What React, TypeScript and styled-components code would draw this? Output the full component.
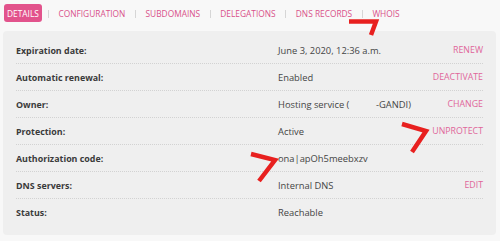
import React from "react";
import styled, { createGlobalStyle } from "styled-components";

const Global = createGlobalStyle`
  html, body { margin: 0; padding: 0; background: #f8f8f8; }
  body { font-family: "Open Sans", "DejaVu Sans", sans-serif; }
`;

const Page = styled.div`
  position: relative;
  width: 500px;
  height: 241px;
  padding: 4px 3px 0 3px;
  box-sizing: border-box;
`;

const Tabs = styled.nav`
  display: flex;
  align-items: center;
  height: 18px;
  margin-left: 1px;
`;

const Tab = styled.span<{ $active?: boolean }>`
  font-size: 8.35px;
  text-transform: uppercase;
  color: ${(p) => (p.$active ? "#ffffff" : "#d9518a")};
  background: ${(p) => (p.$active ? "#e2538c" : "transparent")};
  border-radius: 3px;
  padding: ${(p) => (p.$active ? "0 3px" : "0")};
  height: 18px;
  line-height: 19px;
`;

const Sep = styled.span<{ $first?: boolean }>`
  width: 1px;
  height: 8px;
  background: #d6d6d6;
  margin: 1px 9.6px 0 ${(p) => (p.$first ? "6px" : "9.6px")};
`;

const Panel = styled.section`
  margin-top: 9px;
  width: 493px;
  background: #efefef;
  border-radius: 4px;
  padding: 6px 13px 9px 13px;
  box-sizing: border-box;
`;

const Row = styled.div<{ $last?: boolean }>`
  display: grid;
  grid-template-columns: 262px 1fr auto;
  align-items: center;
  height: 27px;
  border-bottom: ${(p) => (p.$last ? "none" : "1px dotted #d2d2d2")};
  box-sizing: border-box;
`;

const Label = styled.span`
  font-size: 8.9px;
  font-weight: 700;
  color: #3a3a3a;
`;

const Value = styled.span`
  font-size: 9.35px;
  color: #454545;
  white-space: pre;
`;

const Action = styled.span`
  font-size: 8.8px;
  color: #e0669a;
  text-transform: uppercase;
  text-align: right;
`;

const Arrow = styled.svg`
  position: absolute;
  left: 0;
  top: 0;
  pointer-events: none;
`;

const rows: [string, string, string][] = [
  ["Expiration date:", "June 3, 2020, 12:36 a.m.", "Renew"],
  ["Automatic renewal:", "Enabled", "Deactivate"],
  ["Owner:", "Hosting service (           -GANDI)", "Change"],
  ["Protection:", "Active", "Unprotect"],
  ["Authorization code:", "ona|apOh5meebxzv", ""],
  ["DNS servers:", "Internal DNS", "Edit"],
  ["Status:", "Reachable", ""],
];

const tabs = ["Details", "Configuration", "Subdomains", "Delegations", "DNS records", "Whois"];

export default function App() {
  return (
    <Page>
      <Global />
      <Tabs>
        {tabs.map((t, i) => (
          <React.Fragment key={t}>
            {i > 0 && <Sep $first={i === 1} />}
            <Tab $active={i === 0}>{t}</Tab>
          </React.Fragment>
        ))}
      </Tabs>
      <Panel>
        {rows.map(([l, v, a], i) => (
          <Row key={l} $last={i === rows.length - 1}>
            <Label>{l}</Label>
            <Value>{v}</Value>
            <Action>{a}</Action>
          </Row>
        ))}
      </Panel>
      <Arrow width="500" height="241" viewBox="0 0 500 241">
        <g fill="none" stroke="#e8201f" strokeWidth="4.5" strokeLinejoin="miter" strokeLinecap="butt">
          <path d="M349 21.5 L376 21.5 L371 35" />
          <path d="M402 124 L426 131 L412 152" />
          <path d="M251 154 L275 160 L259 181" />
        </g>
      </Arrow>
    </Page>
  );
}
